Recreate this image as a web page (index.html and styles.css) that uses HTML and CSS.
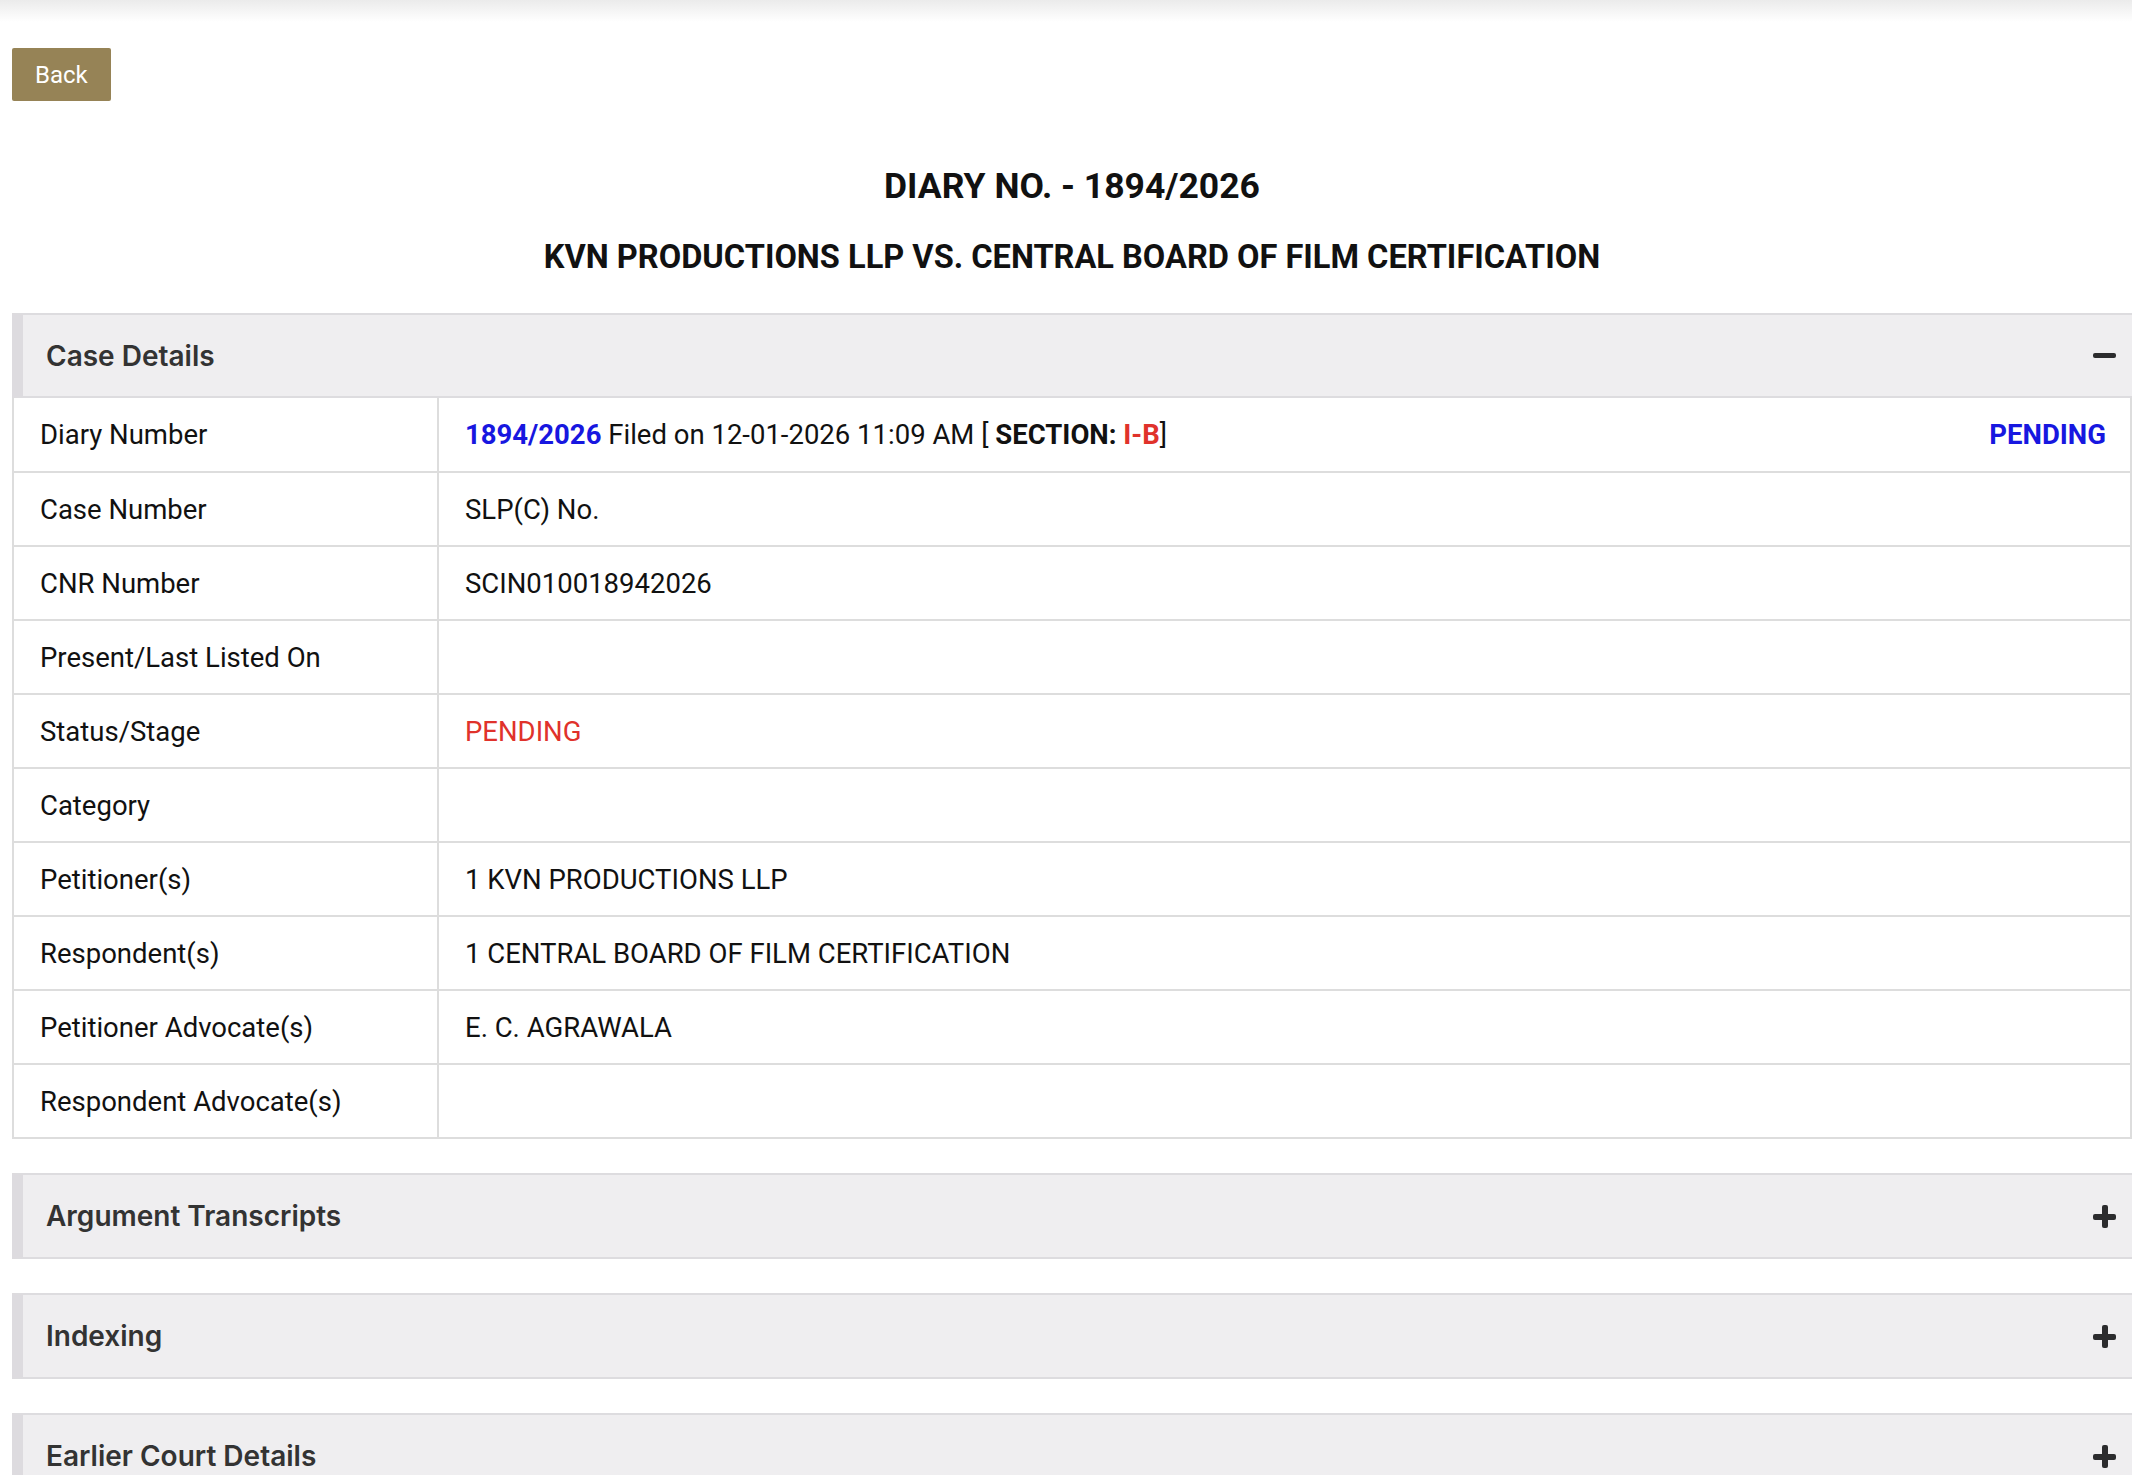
FILE: index.html
```html
<!DOCTYPE html>
<html>
<head>
<meta charset="utf-8">
<link rel="stylesheet" href="styles.css">
</head>
<body>
<div class="topshade"></div>
<div class="page">
  <div class="actions"><button class="back-btn">Back</button></div>
  <h2 class="title-main">DIARY NO. - 1894/2026</h2>
  <h3 class="title-sub">KVN PRODUCTIONS LLP VS. CENTRAL BOARD OF FILM CERTIFICATION</h3>

  <section class="panel">
    <div class="panel-head">
      <span class="panel-title">Case Details</span>
      <span class="icon-minus"></span>
    </div>
    <table class="details">
      <colgroup><col class="col-label"><col></colgroup>
      <tr>
        <td class="label">Diary Number</td>
        <td class="value">
          <div class="diary-line">
            <span><b class="blue">1894/2026</b> Filed on 12-01-2026 11:09 AM [ <b>SECTION:</b> <b class="red">I-B</b>]</span>
            <b class="blue">PENDING</b>
          </div>
        </td>
      </tr>
      <tr><td class="label">Case Number</td><td class="value">SLP(C) No.</td></tr>
      <tr><td class="label">CNR Number</td><td class="value">SCIN010018942026</td></tr>
      <tr><td class="label">Present/Last Listed On</td><td class="value"></td></tr>
      <tr><td class="label">Status/Stage</td><td class="value"><span class="red">PENDING</span></td></tr>
      <tr><td class="label">Category</td><td class="value"></td></tr>
      <tr><td class="label">Petitioner(s)</td><td class="value">1 KVN PRODUCTIONS LLP</td></tr>
      <tr><td class="label">Respondent(s)</td><td class="value">1 CENTRAL BOARD OF FILM CERTIFICATION</td></tr>
      <tr><td class="label">Petitioner Advocate(s)</td><td class="value">E. C. AGRAWALA</td></tr>
      <tr><td class="label">Respondent Advocate(s)</td><td class="value"></td></tr>
    </table>
  </section>

  <section class="panel collapsed">
    <div class="panel-head">
      <span class="panel-title">Argument Transcripts</span>
      <span class="icon-plus"></span>
    </div>
  </section>

  <section class="panel collapsed">
    <div class="panel-head">
      <span class="panel-title">Indexing</span>
      <span class="icon-plus"></span>
    </div>
  </section>

  <section class="panel collapsed">
    <div class="panel-head">
      <span class="panel-title">Earlier Court Details</span>
      <span class="icon-plus"></span>
    </div>
  </section>
</div>
</body>
</html>
```

FILE: styles.css
```css
html, body {
  margin: 0;
  padding: 0;
  background: #ffffff;
}
body {
  font-family: Roboto, "Liberation Sans", sans-serif;
  color: #111111;
  overflow: hidden;
}
.topshade {
  height: 22px;
  background: linear-gradient(to bottom, #ebebeb, #ffffff);
}
.page {
  padding: 26px 0 40px 12px;
}
.actions {
  display: flex;
}
.back-btn {
  height: 53px;
  padding: 0 23px;
  background: #968356;
  color: #ffffff;
  border: none;
  border-radius: 2px;
  font-family: Roboto, "Liberation Sans", sans-serif;
  font-size: 24px;
}
.title-main {
  margin: 63px 0 0;
  text-align: center;
  font-size: 35.5px;
  line-height: 44px;
  font-weight: 700;
  color: #111;
}
.title-sub {
  margin: 29px 0 0;
  text-align: center;
  font-size: 32.6px;
  line-height: 40px;
  font-weight: 700;
  color: #111;
}
.panel {
  margin-top: 34px;
}
.panel:first-of-type {
  margin-top: 36px;
}
.panel-head {
  display: flex;
  align-items: center;
  justify-content: space-between;
  height: 82px;
  background: #efeef0;
  border-top: 2px solid #dddcdf;
  border-bottom: 2px solid #dddcdf;
  border-left: 11px solid #dddbdf;
  padding: 0 16px 0 23px;
}
.panel:first-of-type .panel-head {
  height: 81px;
}
.panel-title {
  font-family: Inter, "Open Sans", sans-serif;
  font-size: 28px;
  font-weight: 600;
  color: #333333;
}
.icon-minus {
  width: 23px;
  height: 5px;
  border-radius: 2px;
  background: #2c2c2e;
}
.icon-plus {
  position: relative;
  width: 23px;
  height: 23px;
}
.icon-plus::before,
.icon-plus::after {
  content: "";
  position: absolute;
  background: #2c2c2e;
  border-radius: 2px;
}
.icon-plus::before {
  left: 0;
  top: 9px;
  width: 23px;
  height: 6px;
}
.icon-plus::after {
  left: 9px;
  top: 0;
  width: 6px;
  height: 23px;
}
.details {
  width: 100%;
  border-collapse: collapse;
  font-size: 27.5px;
}
.col-label {
  width: 425px;
}
.details td {
  height: 74px;
  border: 2px solid #dddddd;
  padding: 0 24px 0 26px;
  vertical-align: middle;
  box-sizing: border-box;
}
.details tr:first-child td {
  border-top: none;
}
.diary-line {
  display: flex;
  justify-content: space-between;
  align-items: center;
}
.blue {
  color: #1717e0;
}
.red {
  color: #e0322b;
}
b {
  font-weight: 700;
}
```
